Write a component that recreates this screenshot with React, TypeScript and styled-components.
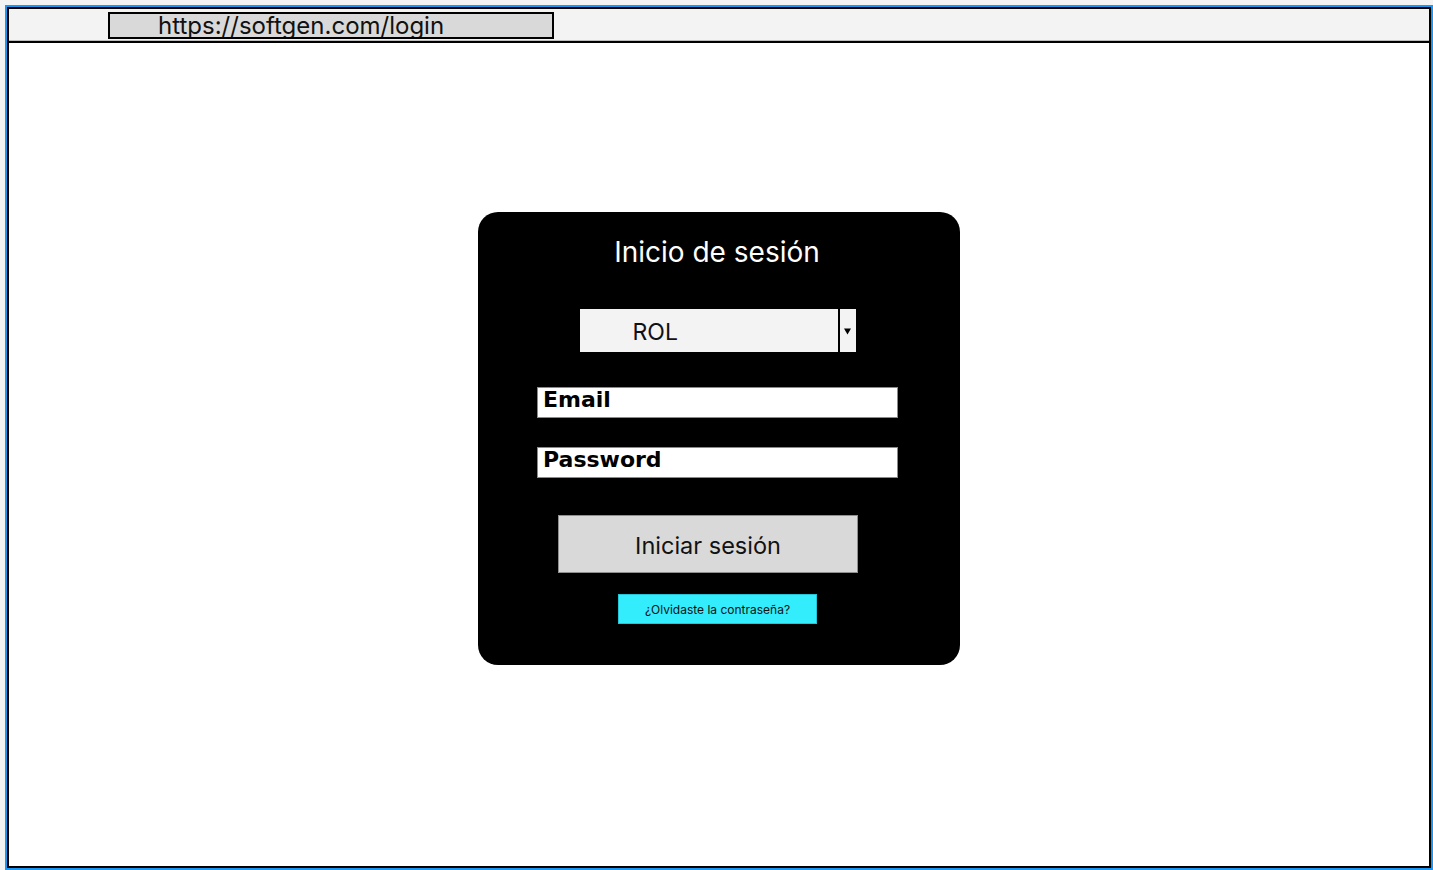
import React from 'react';
import styled, { createGlobalStyle } from 'styled-components';

const GlobalStyle = createGlobalStyle`
  * { box-sizing: border-box; }
  html, body {
    margin: 0;
    padding: 0;
    background: #f3f3f3;
    font-family: Inter, "Liberation Sans", sans-serif;
  }
`;

export default function App() {
  return (
    <>
      <GlobalStyle />
      <Page>
        <Frame>
          <Window>
            <AddressBar>
              <UrlBox>https://softgen.com/login</UrlBox>
            </AddressBar>
            <Main>
              <Card>
                <Title>Inicio de sesión</Title>
                <Select>
                  <SelectValue>ROL</SelectValue>
                  <SelectArrow>
                    <svg width="7" height="7" viewBox="0 0 7 7">
                      <path d="M0 0.5 H7 L3.5 6.5 Z" fill="#000" />
                    </svg>
                  </SelectArrow>
                </Select>
                <Field $top={35}>Email</Field>
                <Field $top={29}>Password</Field>
                <SubmitButton>Iniciar sesión</SubmitButton>
                <ForgotLink>¿Olvidaste la contraseña?</ForgotLink>
              </Card>
            </Main>
          </Window>
        </Frame>
      </Page>
    </>
  );
}

const Page = styled.div`
  padding: 5px 0 0 5px;
  width: 1433px;
  height: 870px;
`;

const Frame = styled.div`
  width: 1428px;
  height: 865px;
  border: 2px solid #1a97f5;
`;

const Window = styled.div`
  display: flex;
  flex-direction: column;
  height: 100%;
  border: 2px solid #000;
  background: #fff;
`;

const AddressBar = styled.div`
  display: flex;
  align-items: center;
  height: 34px;
  padding: 1px 0 0 99px;
  background: #f3f3f3;
  border-bottom: 2px solid #000;
  box-shadow: inset 0 -1px 0 #bdbdbd;
`;

const UrlBox = styled.div`
  width: 446px;
  height: 27px;
  padding: 1px 0 0 48px;
  background: #d9d9d9;
  border: 2px solid #000;
  font-size: 24px;
  line-height: 22px;
  color: #111;
  overflow: hidden;
  white-space: nowrap;
`;

const Main = styled.main`
  flex: 1;
  display: flex;
  justify-content: center;
  align-items: flex-start;
  padding-top: 169px;
`;

const Card = styled.section`
  display: flex;
  flex-direction: column;
  align-items: center;
  width: 482px;
  height: 453px;
  padding-top: 24px;
  background: #000;
  border-radius: 20px;
`;

const Title = styled.h1`
  margin: 0 0 0 -4px;
  font-size: 28px;
  font-weight: 400;
  line-height: 32px;
  color: #fff;
`;

const Select = styled.div`
  display: flex;
  width: 276px;
  height: 43px;
  margin: 41px 0 0 -3px;
  background: #f3f3f3;
`;

const SelectValue = styled.div`
  flex: 1;
  display: flex;
  align-items: center;
  padding: 3px 0 0 53px;
  font-size: 23px;
  color: #111;
  border-right: 2px solid #000;
`;

const SelectArrow = styled.div`
  display: flex;
  align-items: center;
  justify-content: center;
  width: 16px;
  padding-top: 1px;
`;

const Field = styled.div<{ $top: number }>`
  width: 361px;
  height: 31px;
  margin-top: ${(p) => p.$top}px;
  margin-left: -3px;
  padding: 0 0 0 5px;
  background: #fff;
  border: 1px solid #8a8a8a;
  font-family: "DejaVu Sans", sans-serif;
  font-weight: 700;
  font-size: 22px;
  line-height: 24px;
  color: #000;
`;

const SubmitButton = styled.button`
  width: 300px;
  height: 58px;
  margin: 37px 22px 0 0;
  padding: 2px 0 0;
  background: #d9d9d9;
  border: 1px solid #8f8f8f;
  font-family: Inter, "Liberation Sans", sans-serif;
  font-size: 23.5px;
  color: #111;
`;

const ForgotLink = styled.a`
  display: flex;
  align-items: center;
  justify-content: center;
  width: 199px;
  height: 30px;
  margin-top: 21px;
  margin-left: -3px;
  background: #33ecfc;
  border: 1px solid #22c6d6;
  font-size: 12px;
  color: #111;
`;
